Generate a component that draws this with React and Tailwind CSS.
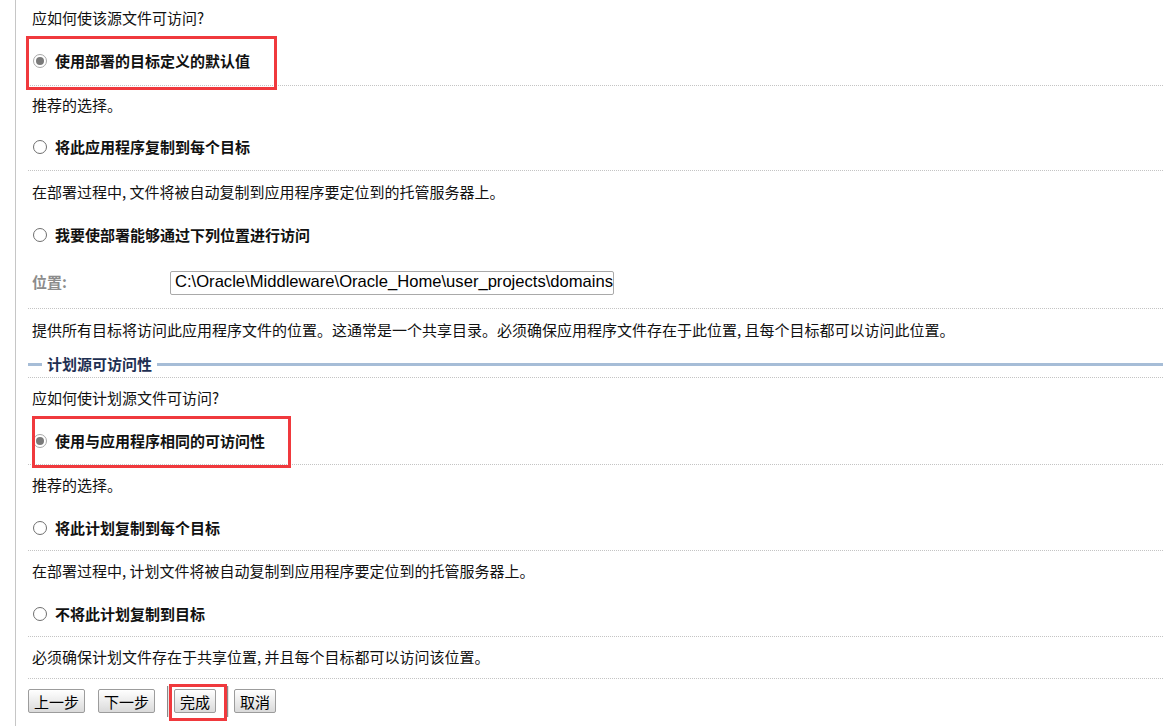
import React from 'react';

const Radio = ({ checked }) =>
    checked ? (
        <span className="inline-flex items-center justify-center w-[14px] h-[14px] rounded-full border border-[#a8a8a8] bg-white shrink-0">
            <span className="w-[8px] h-[8px] rounded-full bg-[#7a7a7a]" />
        </span>
    ) : (
        <span className="inline-block w-[14px] h-[14px] rounded-full border border-[#6f6f6f] bg-white shrink-0" />
    );

const RedBox = ({ className }) => (
    <div className={`absolute border-[3px] border-[#f0393d] pointer-events-none ${className}`} />
);

const Option = ({ h, checked, label, divider, children }) => (
    <div
        className={`relative flex items-center pl-[5px] ${h} ${divider ? 'border-b border-dotted border-[#c4c4c4]' : ''}`}
    >
        <Radio checked={checked} />
        <span className="ml-[8px] font-bold">{label}</span>
        {children}
    </div>
);

const Text = ({ h, divider, children }) => (
    <div className={`flex items-center pl-[4px] ${h} ${divider ? 'border-b border-dotted border-[#c4c4c4]' : ''}`}>
        {children}
    </div>
);

const Button = ({ children }) => (
    <button className="h-[24px] px-[5px] border border-[#9c9c9c] rounded-[2px] bg-gradient-to-b from-white to-[#dadada] text-[15px] leading-none text-black">
        {children}
    </button>
);

const Separator = () => <div className="w-[2px] h-[31px] border-l border-[#8a8a8a] border-r border-r-[#e6e6e6] -mt-[3px]" />;

export default function App() {
    return (
        <div
            className="w-full h-[726px] bg-white overflow-hidden text-[15px] text-[#111]"
            style={{ fontFamily: '"Noto Sans CJK SC", "Noto Sans", sans-serif' }}
        >
            <div className="ml-[15px] h-full border-l border-[#c6c6c6] pl-[12px]">
                {/* Source accessibility */}
                <Text h="h-[37px]">应如何使该源文件可访问?</Text>
                <Option h="h-[49px]" checked label="使用部署的目标定义的默认值" divider>
                    <RedBox className="left-[-2px] top-[-1px] w-[251px] h-[54px]" />
                </Option>
                <Text h="h-[38px]">推荐的选择。</Text>
                <Option h="h-[47px]" label="将此应用程序复制到每个目标" divider />
                <Text h="h-[42px]">在部署过程中, 文件将被自动复制到应用程序要定位到的托管服务器上。</Text>
                <Option h="h-[44px]" label="我要使部署能够通过下列位置进行访问" />

                <div className="flex items-center h-[52px] pl-[4px] border-b border-dotted border-[#c4c4c4]">
                    <span className="w-[138px] font-bold text-[#8c8c8c]">位置:</span>
                    <div className="w-[444px] h-[24px] border border-[#a9a9a9] rounded-[2px] overflow-hidden flex items-center pl-[4px]">
                        <span
                            className="whitespace-nowrap text-[16.6px] text-black leading-none"
                            style={{ fontFamily: '"Liberation Sans", Arial, sans-serif' }}
                        >
                            C:\Oracle\Middleware\Oracle_Home\user_projects\domains
                        </span>
                    </div>
                </div>
                <Text h="h-[42px]">
                    提供所有目标将访问此应用程序文件的位置。这通常是一个共享目录。必须确保应用程序文件存在于此位置, 且每个目标都可以访问此位置。
                </Text>

                {/* Plan source accessibility */}
                <div className="flex items-center h-[27px] border-b border-dotted border-[#c4c4c4]">
                    <div className="w-[14px] h-[3px] bg-[#a6bdd7]" />
                    <span className="px-[5px] font-bold text-[#1e2f52]">计划源可访问性</span>
                    <div className="flex-1 h-[3px] bg-[#a6bdd7]" />
                </div>
                <Text h="h-[40px]">应如何使计划源文件可访问?</Text>
                <Option h="h-[47px]" checked label="使用与应用程序相同的可访问性" divider>
                    <RedBox className="left-[4px] top-[-2px] w-[259px] h-[52px]" />
                </Option>
                <Text h="h-[41px]">推荐的选择。</Text>
                <Option h="h-[45px]" label="将此计划复制到每个目标" divider />
                <Text h="h-[41px]">在部署过程中, 计划文件将被自动复制到应用程序要定位到的托管服务器上。</Text>
                <Option h="h-[45px]" label="不将此计划复制到目标" divider />
                <Text h="h-[42px]" divider>
                    必须确保计划文件存在于共享位置, 并且每个目标都可以访问该位置。
                </Text>

                {/* Actions */}
                <div className="flex items-start pt-[10px]">
                    <Button>上一步</Button>
                    <div className="w-[13px]" />
                    <Button>下一步</Button>
                    <div className="w-[12px]" />
                    <Separator />
                    <div className="relative ml-[5px] mr-[11px]">
                        <Button>完成</Button>
                        <RedBox className="left-[-5px] top-[-5px] w-[58px] h-[37px]" />
                    </div>
                    <Separator />
                    <div className="w-[5px]" />
                    <Button>取消</Button>
                </div>
            </div>
        </div>
    );
}
